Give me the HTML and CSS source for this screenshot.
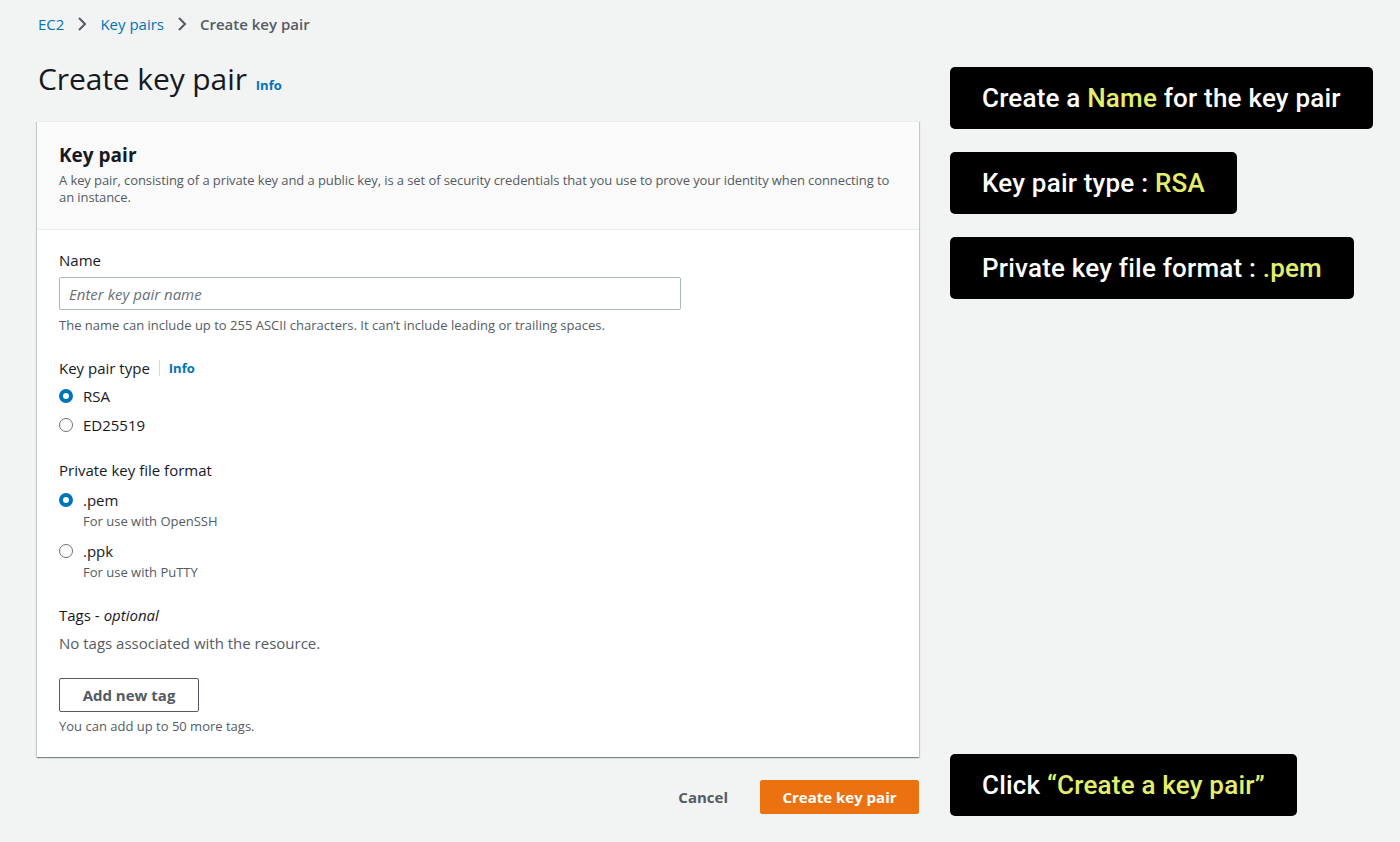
FILE: index.html
```html
<!DOCTYPE html>
<html>
<head>
    <title>Create key pair</title>
    <link rel="stylesheet" href="styles.css">
</head>
<body>
    <div class="page">
        <div class="main">
            <nav class="crumbs">
                <a href="#">EC2</a>
                <svg class="chev" viewBox="0 0 16 16"><path d="M5 2l6 6-6 6"/></svg>
                <a href="#">Key pairs</a>
                <svg class="chev" viewBox="0 0 16 16"><path d="M5 2l6 6-6 6"/></svg>
                <span class="current">Create key pair</span>
            </nav>

            <div class="title-row">
                <h1>Create key pair</h1>
                <a class="info" href="#">Info</a>
            </div>

            <div class="panel">
                <div class="panel-head">
                    <h2>Key pair</h2>
                    <p>A key pair, consisting of a private key and a public key, is a set of security credentials that you use to prove your identity when connecting to an instance.</p>
                </div>
                <div class="panel-body">
                    <div class="field">
                        <label class="label">Name</label>
                        <input class="text-input" type="text" placeholder="Enter key pair name">
                        <div class="hint">The name can include up to 255 ASCII characters. It can’t include leading or trailing spaces.</div>
                    </div>

                    <div class="field">
                        <div class="label">Key pair type <a class="info divided" href="#">Info</a></div>
                        <div class="radios">
                            <div class="radio checked"><span class="dot"></span><span>RSA</span></div>
                            <div class="radio"><span class="dot"></span><span>ED25519</span></div>
                        </div>
                    </div>

                    <div class="field">
                        <div class="label">Private key file format</div>
                        <div class="radios wide">
                            <div class="radio checked">
                                <span class="dot"></span>
                                <div>
                                    <div>.pem</div>
                                    <div class="radio-sub">For use with OpenSSH</div>
                                </div>
                            </div>
                            <div class="radio">
                                <span class="dot"></span>
                                <div>
                                    <div>.ppk</div>
                                    <div class="radio-sub">For use with PuTTY</div>
                                </div>
                            </div>
                        </div>
                    </div>

                    <div class="field">
                        <div class="label">Tags - <i>optional</i></div>
                        <div class="empty">No tags associated with the resource.</div>
                        <button class="btn-normal">Add new tag</button>
                        <div class="hint tight">You can add up to 50 more tags.</div>
                    </div>
                </div>
            </div>

            <div class="actions">
                <button class="btn-link">Cancel</button>
                <button class="btn-primary">Create key pair</button>
            </div>
        </div>

        <div class="notes">
            <div class="note">Create a&nbsp;<em>Name</em>&nbsp;for the key pair</div>
            <div class="note">Key pair type :&nbsp;<em>RSA</em></div>
            <div class="note">Private key file format :&nbsp;<em>.pem</em></div>
            <div class="note last">Click&nbsp;<em>“Create a key pair”</em></div>
        </div>
    </div>
</body>
</html>
```

FILE: styles.css
```css
body {
    margin: 0;
    background-color: #f2f3f3;
    font-family: "Open Sans", "Noto Sans", sans-serif;
    color: #16191f;
}

a {
    color: #0073bb;
    text-decoration: none;
}

.page {
    display: grid;
    grid-template-columns: 882px 425px;
    column-gap: 31px;
    padding-left: 37px;
}

/* breadcrumbs */
.crumbs {
    display: flex;
    align-items: center;
    padding: 14px 0 0 1px;
    font-size: 15px;
    line-height: 20px;
}

.chev {
    width: 16px;
    height: 16px;
    margin: 0 10px;
    fill: none;
    stroke: #545b64;
    stroke-width: 2;
}

.crumbs .current {
    color: #545b64;
    font-weight: 600;
}

/* title */
.title-row {
    display: flex;
    align-items: baseline;
    margin: 27px 0 24px 1px;
}

h1 {
    margin: 0;
    font-size: 30px;
    line-height: 36px;
    font-weight: 400;
    letter-spacing: -0.1px;
}

.info {
    font-size: 13px;
    font-weight: 700;
}

.title-row .info {
    margin-left: 9px;
}

/* panel */
.panel {
    background-color: #fff;
    box-shadow: 0 1px 1px 0 rgba(0, 28, 36, 0.3), 1px 1px 1px 0 rgba(0, 28, 36, 0.15), -1px 1px 1px 0 rgba(0, 28, 36, 0.15);
    border-top: 1px solid #eaeded;
}

.panel-head {
    background-color: #fafafa;
    border-bottom: 1px solid #eaeded;
    padding: 22px 22px 23px;
}

.panel-head h2 {
    margin: 0 0 6px;
    font-size: 19px;
    line-height: 22px;
    font-weight: 700;
}

.panel-head p {
    margin: 0;
    font-size: 13px;
    line-height: 17px;
    color: #545b64;
    letter-spacing: -0.09px;
}

.panel-body {
    padding: 20px 22px 23px;
}

.field + .field {
    margin-top: 25px;
}

.label {
    display: flex;
    align-items: center;
    font-size: 15px;
    line-height: 20px;
}

.label i {
    margin-left: 4px;
}

.info.divided {
    margin-left: 9px;
    padding-left: 9px;
    border-left: 1px solid #d5dbdb;
    line-height: 16px;
}

.text-input {
    display: block;
    box-sizing: border-box;
    width: 622px;
    height: 33px;
    margin-top: 7px;
    padding: 0 9px;
    border: 1px solid #aab7b8;
    border-radius: 2px;
    font-family: inherit;
    font-size: 15px;
}

.text-input::placeholder {
    color: #687078;
    font-style: italic;
}

.hint {
    margin-top: 7px;
    font-size: 13px;
    line-height: 16px;
    color: #545b64;
}

.hint.tight {
    margin-top: 6px;
}

/* radios */
.radios {
    display: flex;
    flex-direction: column;
    gap: 9px;
    margin-top: 8px;
}

.radios.wide {
    gap: 12px;
    margin-top: 10px;
}

.radio {
    display: flex;
    align-items: flex-start;
    gap: 10px;
    font-size: 15px;
    line-height: 20px;
}

.dot {
    box-sizing: border-box;
    flex: none;
    width: 14px;
    height: 14px;
    margin-top: 3px;
    border: 1.5px solid #687078;
    border-radius: 50%;
    background-color: #fff;
}

.radio.checked .dot {
    border: 4px solid #0073bb;
}

.radio-sub {
    margin-top: 3px;
    font-size: 13px;
    line-height: 16px;
    color: #545b64;
}

.empty {
    margin-top: 8px;
    font-size: 15px;
    line-height: 20px;
    color: #545b64;
}

/* buttons */
button {
    font-family: inherit;
    font-size: 15px;
    font-weight: 700;
    cursor: pointer;
}

.btn-normal {
    display: block;
    width: 140px;
    height: 34px;
    margin-top: 25px;
    border: 1px solid #545b64;
    border-radius: 2px;
    background-color: #fff;
    color: #545b64;
}

.actions {
    display: flex;
    justify-content: flex-end;
    align-items: center;
    gap: 12px;
    margin-top: 23px;
    padding-bottom: 2px;
}

.btn-link {
    height: 34px;
    padding: 0 20px;
    border: none;
    background: none;
    color: #545b64;
}

.btn-primary {
    width: 159px;
    height: 34px;
    border: 1px solid #ec7211;
    border-radius: 2px;
    background-color: #ec7211;
    color: #fff;
}

/* annotations */
.notes {
    display: flex;
    flex-direction: column;
    align-items: flex-start;
    gap: 23px;
    padding-top: 67px;
}

.note {
    display: flex;
    align-items: center;
    height: 62px;
    padding: 0 32px;
    border-radius: 5px;
    background-color: #000;
    color: #fff;
    font-family: Roboto, sans-serif;
    font-size: 26px;
    font-weight: 500;
    letter-spacing: 0.2px;
    white-space: nowrap;
}

.note em {
    font-style: normal;
    color: #e3ef6b;
}

.note.last {
    margin-top: auto;
}
```
